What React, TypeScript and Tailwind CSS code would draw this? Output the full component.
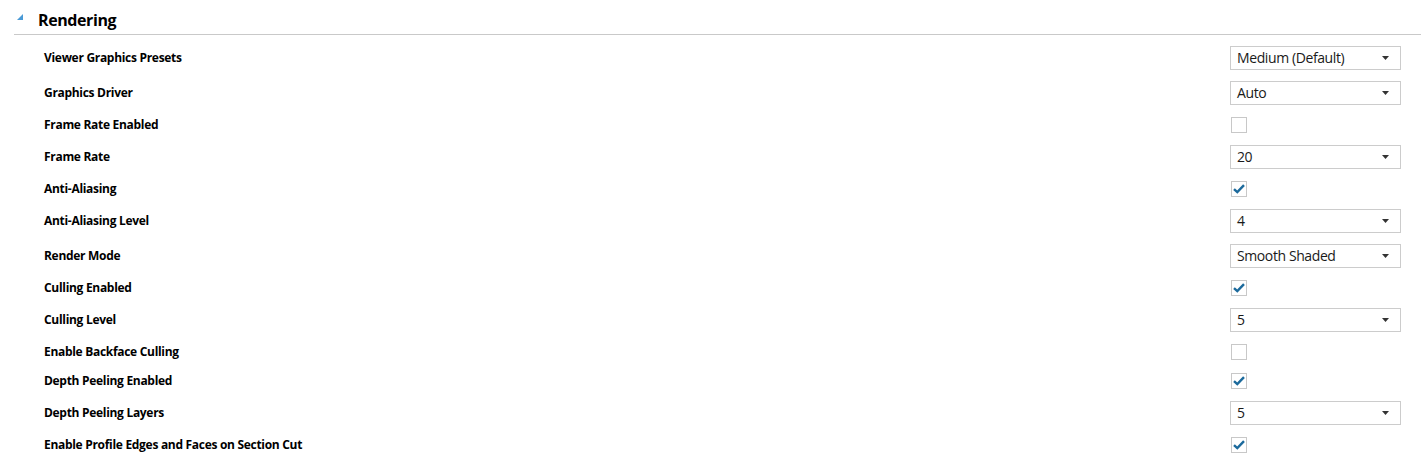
type Row =
  | { label: string; kind: 'select'; value: string }
  | { label: string; kind: 'check'; checked: boolean };

const rows: Row[] = [
  { label: 'Viewer Graphics Presets', kind: 'select', value: 'Medium (Default)' },
  { label: 'Graphics Driver', kind: 'select', value: 'Auto' },
  { label: 'Frame Rate Enabled', kind: 'check', checked: false },
  { label: 'Frame Rate', kind: 'select', value: '20' },
  { label: 'Anti-Aliasing', kind: 'check', checked: true },
  { label: 'Anti-Aliasing Level', kind: 'select', value: '4' },
  { label: 'Render Mode', kind: 'select', value: 'Smooth Shaded' },
  { label: 'Culling Enabled', kind: 'check', checked: true },
  { label: 'Culling Level', kind: 'select', value: '5' },
  { label: 'Enable Backface Culling', kind: 'check', checked: false },
  { label: 'Depth Peeling Enabled', kind: 'check', checked: true },
  { label: 'Depth Peeling Layers', kind: 'select', value: '5' },
  { label: 'Enable Profile Edges and Faces on Section Cut', kind: 'check', checked: true },
];

function Select({ value }: { value: string }) {
  return (
    <div className="w-[171px] h-[24px] border border-[#cccccc] bg-white flex items-center justify-between pl-[6px] pr-[11px]">
      <span className="text-[14px] tracking-[-0.4px] text-[#1a1a1a] leading-none">{value}</span>
      <svg width="7" height="4" viewBox="0 0 7 4">
        <path d="M0 0H7L3.5 4Z" fill="#333" />
      </svg>
    </div>
  );
}

function Check({ checked }: { checked: boolean }) {
  return (
    <div className="ml-[1px] w-[16px] h-[16px] border border-[#c8c8c8] bg-white flex items-center justify-center">
      {checked && (
        <svg width="12" height="10" viewBox="0 0 12 10">
          <path d="M1 5.2L4.3 8.2L11 1.2" fill="none" stroke="#1c6a9c" strokeWidth="2.4" />
        </svg>
      )}
    </div>
  );
}

export default function App() {
  return (
    <div className="w-[1421px] h-[466px] bg-white font-['Open_Sans',sans-serif] text-black">
      <div className="ml-[14px] h-[35px] border-b border-[#c9c9c9] flex items-center pl-[3px]">
        <svg width="6" height="6" viewBox="0 0 6 6" className="mr-[15px] mt-[-1px]">
          <path d="M6 0V6H0Z" fill="#4a9ad6" />
        </svg>
        <span className="text-[16px] font-bold tracking-[-0.4px] mt-[6px]">Rendering</span>
      </div>
      <div className="ml-[44px] mr-[20px] pt-[5px]">
        {rows.map((r) => (
          <div
            key={r.label}
            className={`flex items-center justify-between ${r.kind === 'select' ? 'h-[35px]' : 'h-[29px]'}`}
          >
            <span className="text-[12px] font-bold tracking-[-0.3px]">{r.label}</span>
            <div className="w-[171px]">
              {r.kind === 'select' ? <Select value={r.value} /> : <Check checked={r.checked} />}
            </div>
          </div>
        ))}
      </div>
    </div>
  );
}
